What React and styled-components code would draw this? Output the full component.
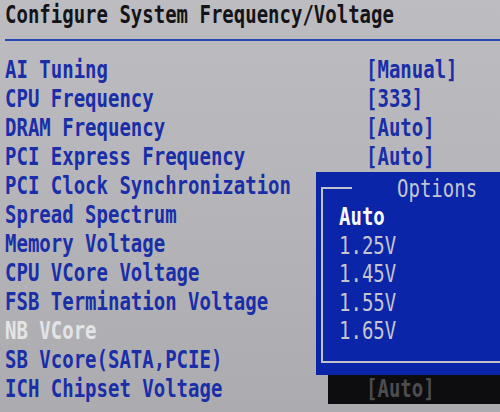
import React from "react";
import styled, { createGlobalStyle } from "styled-components";

const Global = createGlobalStyle`
  html, body { margin: 0; padding: 0; }
  body { background: #b4b4b8; }
`;

const Page = styled.div`
  position: relative;
  z-index: 0;
  width: 500px;
  height: 412px;
  overflow: hidden;
  box-sizing: border-box;
  padding: 2px 0 0 5px;
  background: linear-gradient(180deg, #bdbdc1 0%, #b5b5b9 50%, #acacb0 100%);
  font-family: "DejaVu Sans Mono", "Liberation Mono", monospace;
  font-size: 19px;
  font-weight: 700;
`;

const Glyphs = styled.span`
  display: inline-block;
  white-space: pre;
  transform: scaleY(1.28);
  transform-origin: 50% 55%;
`;

const Title = styled.div`
  height: 24px;
  line-height: 24px;
  color: #141418;
`;

const Divider = styled.div`
  margin-top: 13px;
  height: 2px;
  background: #2049b4;
`;

const List = styled.div`
  margin-top: 15px;
  display: flex;
  flex-direction: column;
`;

const Row = styled.div`
  display: flex;
  height: 29px;
  line-height: 29px;
  color: ${(p) => (p.$disabled ? "#e4e4e6" : "#1a2ea8")};
`;

const Label = styled.div`
  width: 361px;
  flex: none;
`;

const Value = styled.div`
  color: ${(p) => (p.$shaded ? "#4c4c50" : "inherit")};
`;

const Popup = styled.div`
  position: absolute;
  left: 316px;
  top: 172px;
  width: 200px;
  height: 203px;
  box-sizing: border-box;
  padding: 15px 0 0 5px;
  background: #0b25a8;
`;

const Shadow = styled.div`
  position: absolute;
  z-index: -1;
  left: 328px;
  top: 375px;
  width: 200px;
  height: 29px;
  background: #0d0d10;
`;

const Frame = styled.div`
  border-left: 2px solid #c2c2cc;
  border-bottom: 2px solid #c2c2cc;
`;

const FrameHead = styled.div`
  display: flex;
  align-items: center;
  height: 2px;
  margin-left: -2px;
`;

const HeadLine = styled.div`
  width: 31px;
  height: 2px;
  background: #c2c2cc;
`;

const HeadTitle = styled.div`
  margin-left: 45px;
  line-height: 26px;
  color: #c4c4cc;
  font-weight: 400;
`;

const Options = styled.div`
  display: flex;
  flex-direction: column;
  padding: 14px 0 15.5px 16px;
`;

const Option = styled.div`
  height: 28.5px;
  line-height: 28.5px;
  color: ${(p) => (p.$active ? "#f8f8fa" : "#c6c6cc")};
  font-weight: ${(p) => (p.$active ? 700 : 400)};
`;

const rows = [
  { label: "AI Tuning", value: "[Manual]" },
  { label: "CPU Frequency", value: "[333]" },
  { label: "DRAM Frequency", value: "[Auto]" },
  { label: "PCI Express Frequency", value: "[Auto]" },
  { label: "PCI Clock Synchronization" },
  { label: "Spread Spectrum" },
  { label: "Memory Voltage" },
  { label: "CPU VCore Voltage" },
  { label: "FSB Termination Voltage" },
  { label: "NB VCore", disabled: true },
  { label: "SB Vcore(SATA,PCIE)" },
  { label: "ICH Chipset Voltage", value: "[Auto]", shaded: true },
];

const options = ["Auto", "1.25V", "1.45V", "1.55V", "1.65V"];

export default function App() {
  return (
    <>
      <Global />
      <Page>
        <Title>
          <Glyphs>Configure System Frequency/Voltage</Glyphs>
        </Title>
        <Divider />
        <List>
          {rows.map((r) => (
            <Row key={r.label} $disabled={r.disabled}>
              <Label>
                <Glyphs>{r.label}</Glyphs>
              </Label>
              {r.value && (
                <Value $shaded={r.shaded}>
                  <Glyphs>{r.value}</Glyphs>
                </Value>
              )}
            </Row>
          ))}
        </List>
        <Shadow />
        <Popup>
          <Frame>
            <FrameHead>
              <HeadLine />
              <HeadTitle>
                <Glyphs>Options</Glyphs>
              </HeadTitle>
            </FrameHead>
            <Options>
              {options.map((o, i) => (
                <Option key={o} $active={i === 0}>
                  <Glyphs>{o}</Glyphs>
                </Option>
              ))}
            </Options>
          </Frame>
        </Popup>
      </Page>
    </>
  );
}
